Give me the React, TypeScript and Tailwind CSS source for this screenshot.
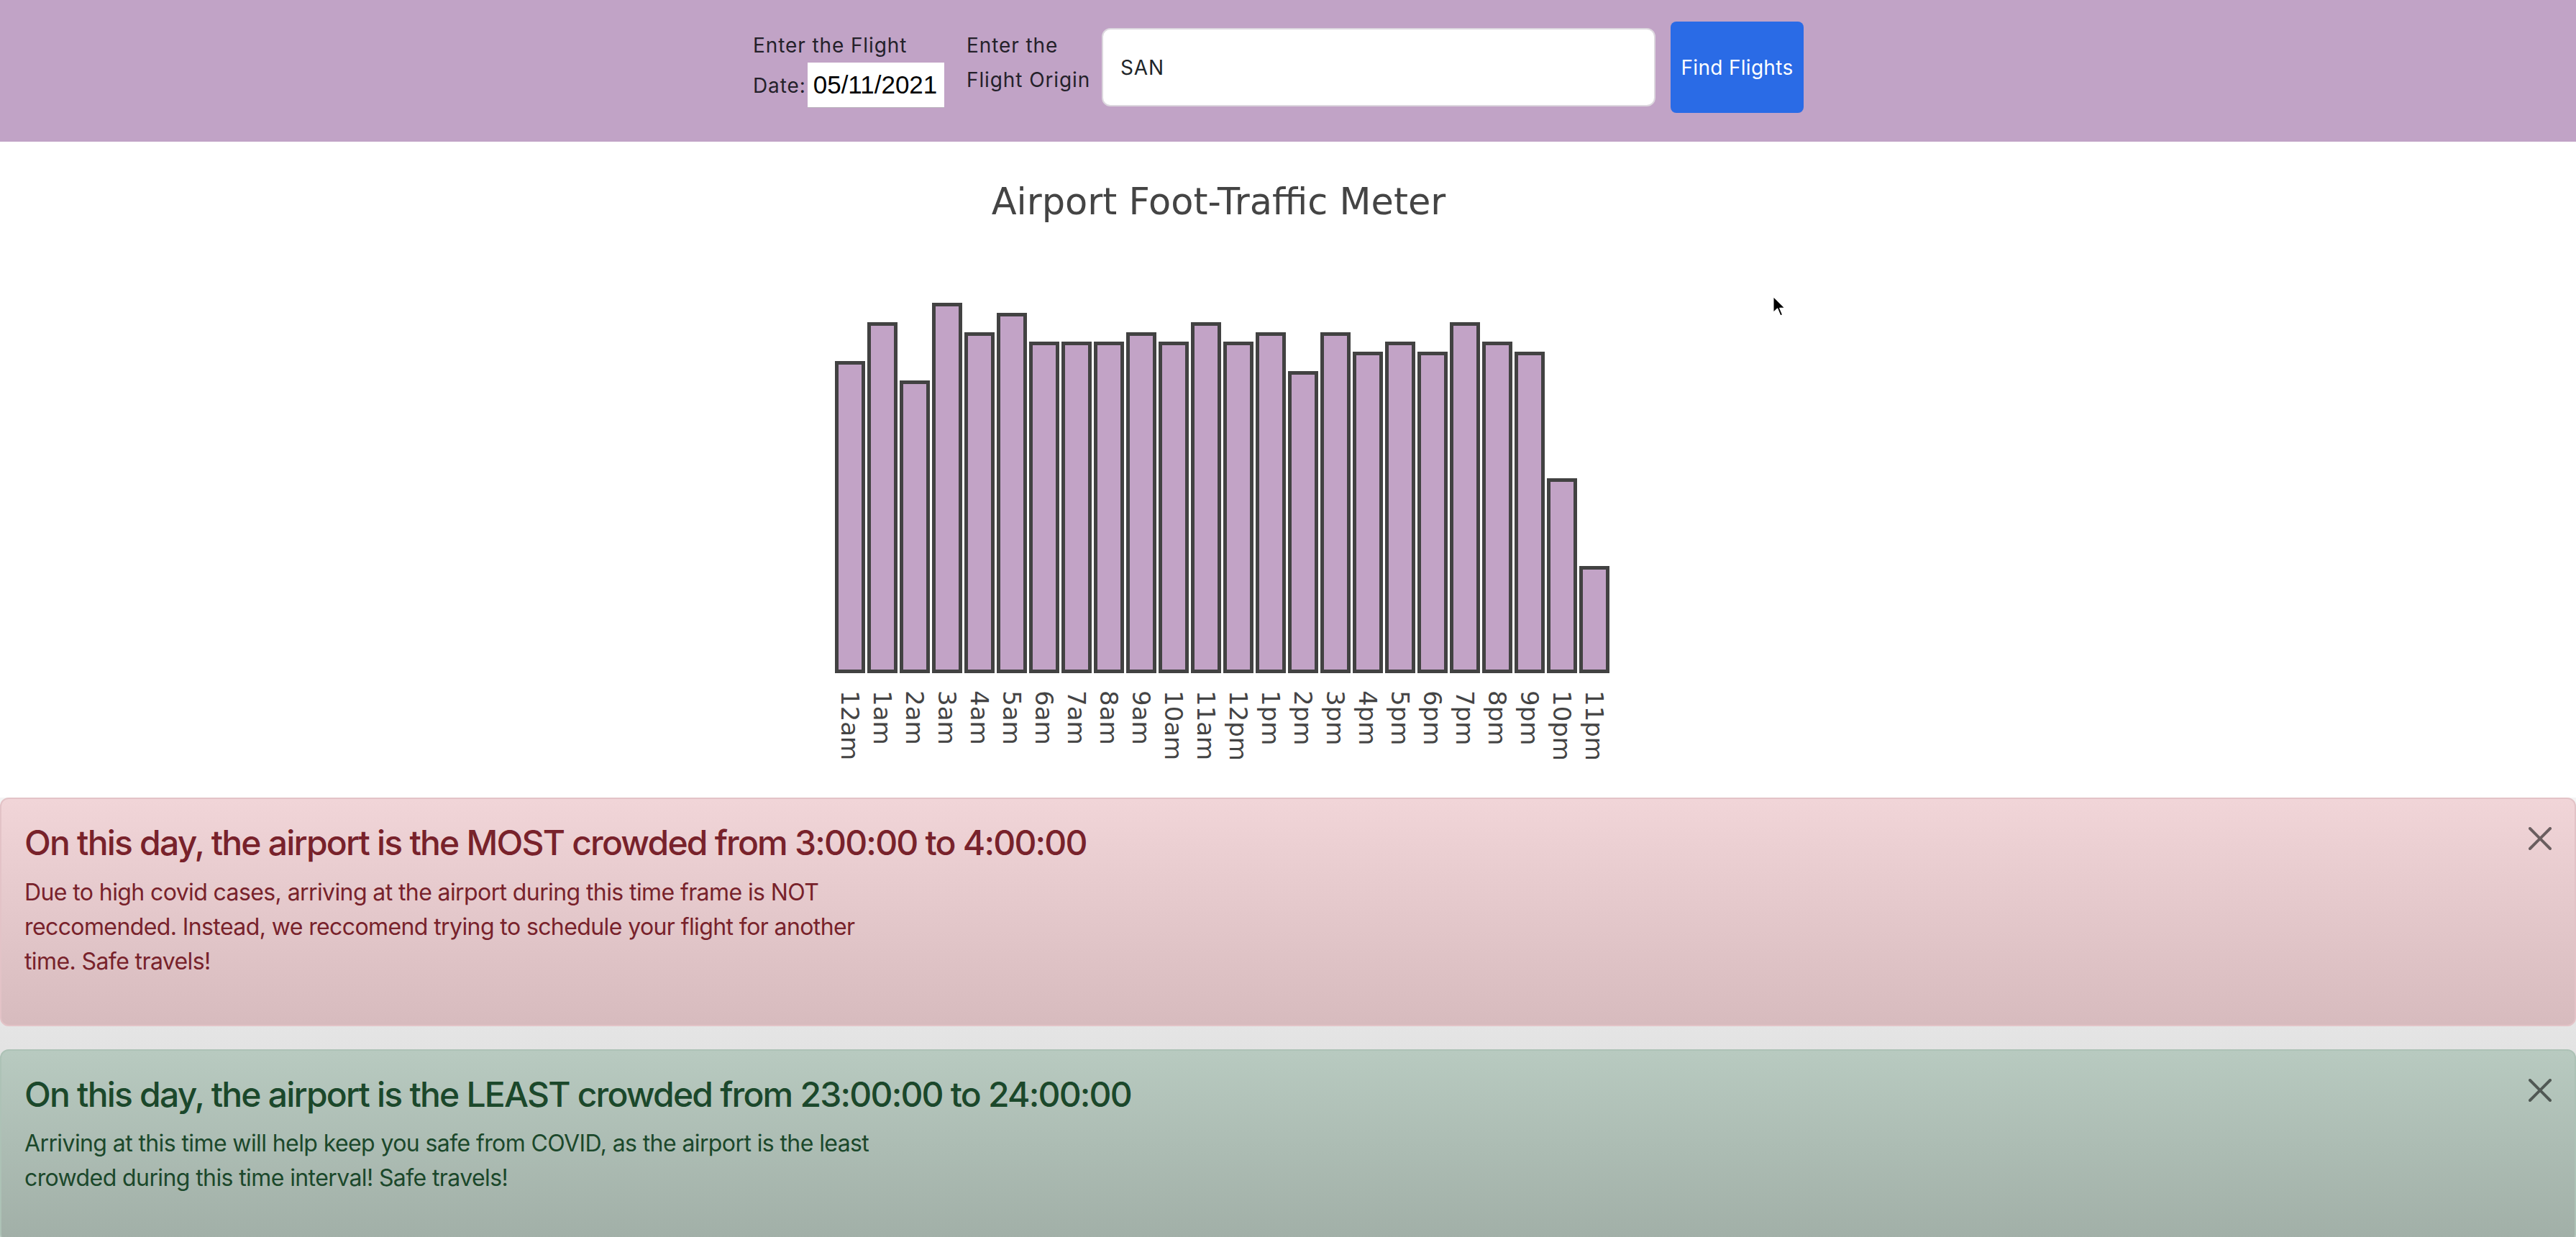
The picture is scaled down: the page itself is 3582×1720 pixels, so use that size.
import React from 'react';

const BAR_UNIT = 13.55;

const hours = [
  { label: '12am', value: 32 },
  { label: '1am', value: 36 },
  { label: '2am', value: 30 },
  { label: '3am', value: 38 },
  { label: '4am', value: 35 },
  { label: '5am', value: 37 },
  { label: '6am', value: 34 },
  { label: '7am', value: 34 },
  { label: '8am', value: 34 },
  { label: '9am', value: 35 },
  { label: '10am', value: 34 },
  { label: '11am', value: 36 },
  { label: '12pm', value: 34 },
  { label: '1pm', value: 35 },
  { label: '2pm', value: 31 },
  { label: '3pm', value: 35 },
  { label: '4pm', value: 33 },
  { label: '5pm', value: 34 },
  { label: '6pm', value: 33 },
  { label: '7pm', value: 36 },
  { label: '8pm', value: 34 },
  { label: '9pm', value: 33 },
  { label: '10pm', value: 20 },
  { label: '11pm', value: 11 },
];

function CloseIcon() {
  return (
    <svg viewBox="0 0 16 16" className="w-[32px] h-[32px]" fill="currentColor" aria-hidden>
      <path d="M.293.293a1 1 0 0 1 1.414 0L8 6.586 14.293.293a1 1 0 1 1 1.414 1.414L9.414 8l6.293 6.293a1 1 0 0 1-1.414 1.414L8 9.414l-6.293 6.293a1 1 0 0 1-1.414-1.414L6.586 8 .293 1.707a1 1 0 0 1 0-1.414z" />
    </svg>
  );
}

function Header() {
  return (
    <header className="h-[197px] bg-[#c1a3c6] flex justify-center items-start pt-[30px] pr-[27px] text-[#24212a] text-[28px] leading-[48px] tracking-[0.9px]">
      <div className="mt-[9px] w-[266px] mr-[31px]">
        <div className="whitespace-nowrap">Enter the Flight</div>
        <div className="flex items-center">
          <span>Date:</span>
          <div className="ml-[2px] h-[63px] w-[190px] bg-white border-b border-[#b9b2bb] flex items-center pl-[8px] text-black text-[35px] tracking-normal font-['Liberation_Sans',sans-serif]">
            05/11/2021
          </div>
        </div>
      </div>
      <div className="mt-[9px] w-[173px] mr-[15px] whitespace-nowrap">
        <div>Enter the</div>
        <div>Flight Origin</div>
      </div>
      <div className="mt-[9px] h-[109px] w-[770px] mr-[21px] rounded-[12px] border-2 border-[#dcd7de] bg-white flex items-center pl-[24px] text-[#212529]">
        SAN
      </div>
      <button className="h-[127px] w-[185px] rounded-[8px] bg-[#2a6be6] text-white text-[28px] tracking-[0.3px] flex items-center justify-center">
        Find Flights
      </button>
    </header>
  );
}

function TrafficChart() {
  return (
    <div className="flex justify-center">
      <div className="mr-[183px] flex flex-col items-center font-['DejaVu_Sans',sans-serif] text-[#444444]">
        <h1 className="mt-[54px] pr-[10px] text-[51px] leading-[59px]">Airport Foot-Traffic Meter</h1>
        <div className="h-[626px] flex items-end gap-[3px]">
          {hours.map((h) => (
            <div
              key={h.label}
              className="w-[42px] border-[5px] border-[#424242] bg-[#c2a3c6]"
              style={{ height: `${Math.round(h.value * BAR_UNIT)}px` }}
            />
          ))}
        </div>
        <div className="h-[173px] flex gap-[3px]">
          {hours.map((h) => (
            <div key={h.label} className="w-[42px] flex justify-center pt-[24px]">
              <span className="[writing-mode:vertical-rl] text-[34px] leading-[38px]">{h.label}</span>
            </div>
          ))}
        </div>
      </div>
    </div>
  );
}

function Alert({
  tone,
  title,
  children,
}: {
  tone: 'danger' | 'success';
  title: string;
  children: React.ReactNode;
}) {
  const toneClass =
    tone === 'danger'
      ? 'bg-[linear-gradient(to_bottom,#f1d5d8,#d7bbbe)] border-[#e3c3c7] text-[#78222b]'
      : 'bg-[linear-gradient(to_bottom,#b8cac0,#a1afa7)] border-[#adc2b6] text-[#1b482b]';

  return (
    <div className={`relative rounded-[12px] border-2 p-[32px] pr-[96px] mb-[32px] ${toneClass}`}>
      <h4 className="text-[48px] leading-[1.2] font-medium tracking-[-1.8px] mb-[16px]">{title}</h4>
      <p className="text-[32px] leading-[48px] tracking-[-0.6px] max-w-[1200px] mb-[32px]">{children}</p>
      <button className="absolute top-[39px] right-[32px] text-black/55" aria-label="Close">
        <CloseIcon />
      </button>
    </div>
  );
}

function Cursor() {
  return (
    <svg
      viewBox="0 0 12 19"
      className="absolute left-[2464px] top-[410px] w-[20px] h-[32px]"
      aria-hidden
    >
      <path d="M1 1 L1 15 L4.5 11.5 L7 17.5 L9 16.6 L6.6 11 L11 11 Z" fill="#000" stroke="#fff" strokeWidth="1" strokeLinejoin="round" />
    </svg>
  );
}

export default function App() {
  return (
    <div className="relative min-h-screen bg-white overflow-hidden font-['Inter','Liberation_Sans',sans-serif]">
      <Header />
      <TrafficChart />
      <section className="bg-[linear-gradient(to_bottom,#f4f4f4,#d6d6d6)]">
        <Alert tone="danger" title="On this day, the airport is the MOST crowded from 3:00:00 to 4:00:00">
          Due to high covid cases, arriving at the airport during this time frame is NOT reccomended.
          Instead, we reccomend trying to schedule your flight for another time. Safe travels!
        </Alert>
        <Alert tone="success" title="On this day, the airport is the LEAST crowded from 23:00:00 to 24:00:00">
          Arriving at this time will help keep you safe from COVID, as the airport is the least crowded
          during this time interval! Safe travels!
        </Alert>
      </section>
      <Cursor />
    </div>
  );
}
